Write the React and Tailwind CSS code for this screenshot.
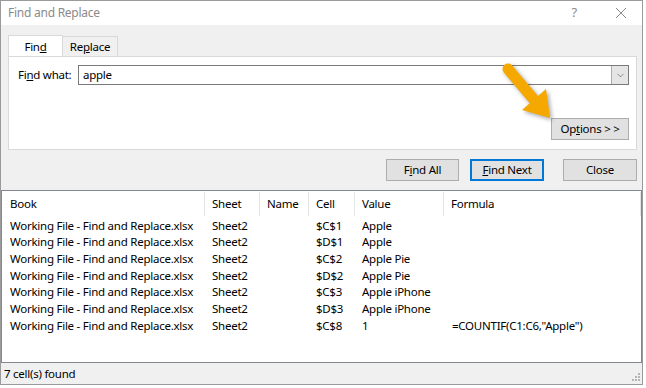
import { ChevronDown } from "lucide-react";

const rows = [
  ["$C$1", "Apple", ""],
  ["$D$1", "Apple", ""],
  ["$C$2", "Apple Pie", ""],
  ["$D$2", "Apple Pie", ""],
  ["$C$3", "Apple iPhone", ""],
  ["$D$3", "Apple iPhone", ""],
  ["$C$8", "1", '=COUNTIF(C1:C6,"Apple")'],
];

const cols = "grid grid-cols-[203px_55px_49px_46px_89px_1fr]";

const Btn = ({ children, className = "" }) => (
  <div
    className={`h-[22px] flex items-center justify-center bg-[#e1e1e1] border border-[#adadad] ${className}`}
  >
    {children}
  </div>
);

const App = () => {
  return (
    <div className="w-[646px] h-[388px] bg-white relative text-[11.5px] tracking-[-0.25px] text-black font-['Segoe_UI','Noto_Sans',sans-serif]">
      <div className="w-[643px] h-[385px] border border-[#9a9a9a] bg-[#f0f0f0] flex flex-col">
        {/* Title bar */}
        <div className="h-[24px] bg-white flex items-center text-[#8a8a8a]">
          <span className="ml-[7px] text-[12px]">Find and Replace</span>
          <span className="ml-auto mr-[38px] text-[13px]">?</span>
          <svg width="12" height="12" viewBox="0 0 12 12" className="mr-[15px]">
            <path d="M1 1 L11 11 M11 1 L1 11" stroke="#8a8a8a" strokeWidth="1" />
          </svg>
        </div>

        {/* Tabs */}
        <div className="flex items-end h-[31px] pl-[7px]">
          <div className="w-[55px] h-[22px] bg-white border border-[#d9d9d9] border-b-0 flex items-center justify-center relative top-[1px]">
            <span>
              Fin<u>d</u>
            </span>
          </div>
          <div className="w-[55px] h-[20px] bg-[#f0f0f0] border border-[#d9d9d9] border-l-0 border-b-0 flex items-center justify-center">
            <span>
              Re<u>p</u>lace
            </span>
          </div>
        </div>

        {/* Tab panel */}
        <div className="mx-[7px] w-[629px] h-[94px] bg-white border border-[#d9d9d9] relative">
          <div className="flex items-center mt-[8px]">
            <span className="ml-[9px] w-[60px]">
              Fi<u>n</u>d what:
            </span>
            <div className="w-[551px] h-[20px] border border-[#7a7a7a] flex items-center">
              <span className="pl-[4px] flex-1">apple</span>
              <div className="w-[17px] h-full bg-[#e5e5e5] border-l border-[#acacac] flex items-center justify-center">
                <ChevronDown className="w-[11px] h-[11px] text-[#606060]" strokeWidth={1.5} />
              </div>
            </div>
          </div>
          <div className="flex justify-end mr-[7px] mt-[33px]">
            <Btn className="w-[78px]">
              Op<u>t</u>ions &gt; &gt;
            </Btn>
          </div>
        </div>

        {/* Buttons */}
        <div className="flex h-[40px] items-center">
          <Btn className="ml-[385px] w-[73px]">
            F<u>i</u>nd All
          </Btn>
          <div className="ml-[11px] w-[74px] h-[22px] flex items-center justify-center bg-[#e1e1e1] border-2 border-[#0078d7]">
            <span>
              <u>F</u>ind Next
            </span>
          </div>
          <Btn className="ml-[19px] w-[74px]">Close</Btn>
        </div>

        {/* Results list */}
        <div className="h-[173px] bg-white border border-[#828790] flex flex-col">
          <div className={`${cols} h-[26px] items-center`}>
            {["Book", "Sheet", "Name", "Cell", "Value", "Formula"].map((h, i) => (
              <div
                key={h}
                className={`h-[24px] flex items-center border-r border-[#e5e5e5] ${
                  i === 0 ? "pl-[8px]" : "pl-[7px]"
                }`}
              >
                {h}
              </div>
            ))}
          </div>
          {rows.map(([cell, value, formula], i) => (
            <div key={i} className={`${cols} h-[16.67px] items-center leading-none`}>
              <div className="pl-[8px] whitespace-nowrap">Working File - Find and Replace.xlsx</div>
              <div className="pl-[7px]">Sheet2</div>
              <div className="pl-[7px]"></div>
              <div className="pl-[7px]">{cell}</div>
              <div className="pl-[7px]">{value}</div>
              <div className="pl-[8px]">{formula}</div>
            </div>
          ))}
        </div>

        {/* Status bar */}
        <div className="flex-1 flex items-center relative">
          <span className="ml-[3px]">7 cell(s) found</span>
          <svg width="10" height="10" viewBox="0 0 10 10" className="absolute right-[1px] bottom-[2px]">
            {[
              [7, 1],
              [4, 4],
              [7, 4],
              [1, 7],
              [4, 7],
              [7, 7],
            ].map(([x, y], i) => (
              <rect key={i} x={x} y={y} width="2" height="2" fill="#b5b5b5" />
            ))}
          </svg>
        </div>
      </div>

      {/* Orange annotation arrow */}
      <svg
        width="80"
        height="80"
        viewBox="0 0 80 80"
        className="absolute left-[488px] top-[53px]"
        style={{ filter: "drop-shadow(2px 2px 2px rgba(0,0,0,0.35))" }}
      >
        <line x1="20" y1="16" x2="47" y2="48" stroke="#f5a800" strokeWidth="11" strokeLinecap="round" />
        <polygon points="62,65 34,57 58,36" fill="#f5a800" />
      </svg>
    </div>
  );
};

export default App;
